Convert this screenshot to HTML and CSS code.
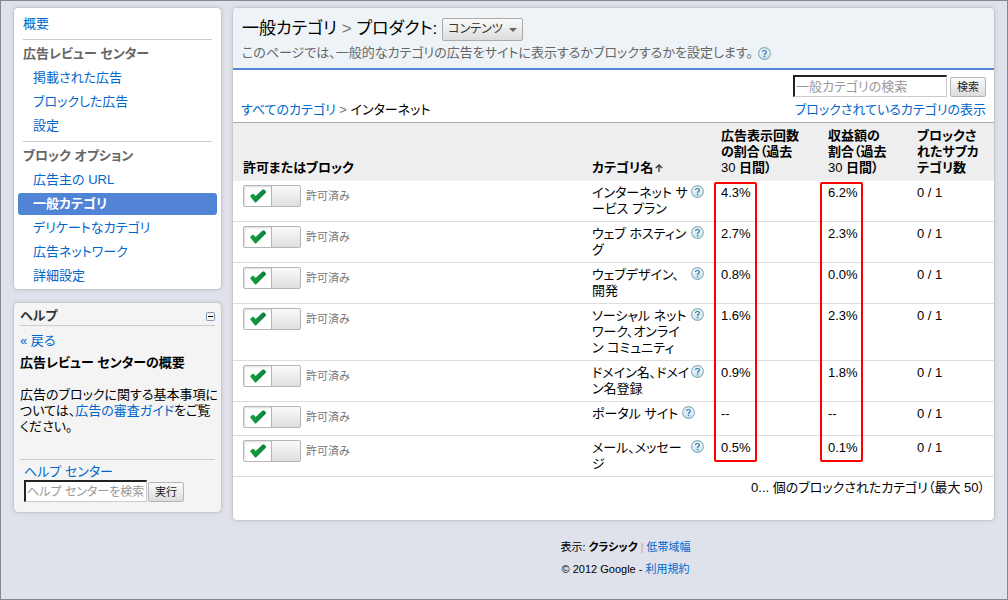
FILE: index.html
```html
<!DOCTYPE html>
<html lang="ja">
<head>
<meta charset="utf-8">
<title>一般カテゴリ</title>
<link rel="stylesheet" href="styles.css">
</head>
<body>
<svg class="defs" aria-hidden="true">
  <defs>
    <linearGradient id="g-help" x1="0" y1="0" x2="0" y2="1"><stop offset="0" stop-color="#fff"/><stop offset="1" stop-color="#c3e0ea"/></linearGradient>
    <linearGradient id="g-check" x1="0" y1="0" x2="1" y2="0"><stop offset="0" stop-color="#17a13c"/><stop offset="1" stop-color="#0b8042"/></linearGradient>
  </defs>
  <symbol id="help" viewBox="0 0 13 13">
    <circle cx="6.5" cy="6.5" r="5.9" fill="url(#g-help)" stroke="#86aeb9" stroke-width="1.1"/>
    <path d="M4.5 5.1C4.5 2.8 8.4 2.8 8.4 5 8.4 6.4 6.5 6.3 6.5 7.9" fill="none" stroke="#4a86b4" stroke-width="1.4"/>
    <rect x="5.8" y="8.8" width="1.5" height="1.4" fill="#4a86b4"/>
  </symbol>
  <symbol id="check" viewBox="0 0 16 14">
    <path d="M0 7.2 2.4 4.8Q4 4.6 5.6 7L12.6 0.4H14.2L16 2.4V3.6L6 13.6H5Z" fill="url(#g-check)"/>
  </symbol>
</svg>
<div class="page">
  <aside class="side">
    <nav class="panel menu">
      <a class="top" href="#">概要</a>
      <h2>広告レビュー センター</h2>
      <a href="#">掲載された広告</a>
      <a href="#">ブロックした広告</a>
      <a href="#">設定</a>
      <h2>ブロック オプション</h2>
      <a href="#">広告主の URL</a>
      <a class="current" href="#">一般カテゴリ</a>
      <a href="#">デリケートなカテゴリ</a>
      <a href="#">広告ネットワーク</a>
      <a href="#">詳細設定</a>
    </nav>
    <section class="panel help">
      <div class="help-head"><h2>ヘルプ</h2><button class="fold" aria-label="折りたたむ"><svg width="9" height="9" viewBox="0 0 9 9"><rect x=".5" y=".5" width="8" height="8" rx="1" fill="#f6f3ea" stroke="#7b96b1"/><path d="M2 4.5H7" stroke="#000"/></svg></button></div>
      <a class="back" href="#">« 戻る</a>
      <h3>広告レビュー センターの概要</h3>
      <p>広告のブロックに関する基本事項に<br>ついては、<a href="#">広告の審査ガイド</a>をご覧<br>ください。</p>
      <div class="help-search">
        <label for="hs">ヘルプ センター</label>
        <div class="line"><input id="hs" type="text" placeholder="ヘルプ センターを検索"><button class="btn">実行</button></div>
      </div>
    </section>
  </aside>
  <div class="content">
    <main class="panel main">
      <header class="title">
        <h1><label for="product">一般カテゴリ <span class="gt">&gt;</span> プロダクト:</label>
          <span class="pick"><select id="product"><option>コンテンツ</option></select><svg width="8" height="4" viewBox="0 0 8 4"><path d="M0 0H8L4 4Z" fill="#666"/></svg></span></h1>
        <p>このページでは、一般的なカテゴリの広告をサイトに表示するかブロックするかを設定します。<a href="#" aria-label="ヘルプ"><svg class="q"><use href="#help"/></svg></a></p>
      </header>
      <div class="tools">
        <div class="crumbs"><a href="#">すべてのカテゴリ</a> <span class="gt">&gt;</span> インターネット</div>
        <div class="find">
          <div class="line"><input type="text" aria-label="一般カテゴリの検索" placeholder="一般カテゴリの検索"><button class="btn">検索</button></div>
          <a href="#">ブロックされているカテゴリの表示</a>
        </div>
      </div>
      <div class="grid">
        <table>
          <colgroup><col><col class="c-name"><col class="c-views"><col class="c-income"><col class="c-sub"></colgroup>
          <thead><tr>
            <th>許可またはブロック</th>
            <th>カテゴリ名<svg class="sort" width="8" height="8" viewBox="0 0 8 8"><path d="M4 8V1M.8 4 4 .9 7.2 4" fill="none" stroke="#444" stroke-width="1.5"/></svg></th>
            <th>広告表示回数<br>の割合（過去<br><span class="num">30</span> 日間）</th>
            <th>収益額の<br>割合（過去<br><span class="num">30</span> 日間）</th>
            <th>ブロックさ<br>れたサブカ<br>テゴリ数</th>
          </tr></thead>
          <tbody>
            <tr><td><div class="allow"><button class="toggle" aria-label="許可" aria-pressed="true"><span><svg><use href="#check"/></svg></span></button>許可済み</div></td><td><div class="name"><span>インターネット サ<br>ービス プラン</span><a href="#" aria-label="ヘルプ"><svg class="q"><use href="#help"/></svg></a></div></td><td>4.3%</td><td>6.2%</td><td>0 / 1</td></tr>
            <tr><td><div class="allow"><button class="toggle" aria-label="許可" aria-pressed="true"><span><svg><use href="#check"/></svg></span></button>許可済み</div></td><td><div class="name"><span>ウェブ ホスティン<br>グ</span><a href="#" aria-label="ヘルプ"><svg class="q"><use href="#help"/></svg></a></div></td><td>2.7%</td><td>2.3%</td><td>0 / 1</td></tr>
            <tr><td><div class="allow"><button class="toggle" aria-label="許可" aria-pressed="true"><span><svg><use href="#check"/></svg></span></button>許可済み</div></td><td><div class="name"><span>ウェブデザイン、<br>開発</span><a href="#" aria-label="ヘルプ"><svg class="q"><use href="#help"/></svg></a></div></td><td>0.8%</td><td>0.0%</td><td>0 / 1</td></tr>
            <tr><td><div class="allow"><button class="toggle" aria-label="許可" aria-pressed="true"><span><svg><use href="#check"/></svg></span></button>許可済み</div></td><td><div class="name"><span>ソーシャル ネット<br>ワーク、オンライ<br>ン コミュニティ</span><a href="#" aria-label="ヘルプ"><svg class="q"><use href="#help"/></svg></a></div></td><td>1.6%</td><td>2.3%</td><td>0 / 1</td></tr>
            <tr><td><div class="allow"><button class="toggle" aria-label="許可" aria-pressed="true"><span><svg><use href="#check"/></svg></span></button>許可済み</div></td><td><div class="name"><span>ドメイン名、ドメイ<br>ン名登録</span><a href="#" aria-label="ヘルプ"><svg class="q"><use href="#help"/></svg></a></div></td><td>0.9%</td><td>1.8%</td><td>0 / 1</td></tr>
            <tr><td><div class="allow"><button class="toggle" aria-label="許可" aria-pressed="true"><span><svg><use href="#check"/></svg></span></button>許可済み</div></td><td><div class="name short"><span>ポータル サイト</span><a href="#" aria-label="ヘルプ"><svg class="q"><use href="#help"/></svg></a></div></td><td>--</td><td>--</td><td>0 / 1</td></tr>
            <tr><td><div class="allow"><button class="toggle" aria-label="許可" aria-pressed="true"><span><svg><use href="#check"/></svg></span></button>許可済み</div></td><td><div class="name"><span>メール、メッセー<br>ジ</span><a href="#" aria-label="ヘルプ"><svg class="q"><use href="#help"/></svg></a></div></td><td>0.5%</td><td>0.1%</td><td>0 / 1</td></tr>
          </tbody>
        </table>
        <div class="mark mark-views"></div>
        <div class="mark mark-income"></div>
      </div>
      <p class="total">0... 個のブロックされたカテゴリ（最大 50）</p>
    </main>
    <footer>
      <div>表示: <b>クラシック</b> <span class="bar">|</span> <a href="#">低帯域幅</a></div>
      <div>© 2012 Google - <a href="#">利用規約</a></div>
    </footer>
  </div>
</div>
</body>
</html>
```
FILE: styles.css
```css
* { box-sizing: border-box; }
body {
  margin: 0;
  min-height: 100vh;
  border: 1px solid #86868e;
  background: #e0e2eb;
  color: #000;
  font: 13px/16px "Liberation Sans", "Noto Sans CJK JP", sans-serif;
  font-feature-settings: "palt";
}
h1, h2, h3, p { margin: 0; font-size: 13px; }
a { color: #0066cc; text-decoration: none; }
button, input, select { font: inherit; font-feature-settings: inherit; margin: 0; }
.defs { position: absolute; width: 0; height: 0; }
.page { display: flex; align-items: flex-start; gap: 10px; padding: 6px 12px 0; }
.side { flex: 0 0 209px; min-width: 0; display: flex; flex-direction: column; gap: 12px; }
.content { flex: 1; min-width: 0; }
.panel {
  border: 1px solid #c9c9cb;
  border-radius: 5px;
  background: #fff;
  box-shadow: 0 0 4px #c8c9d0;
}

.menu { padding: 5px 4px 0; }
.menu a { display: block; height: 22px; margin-bottom: 2px; padding-left: 15px; line-height: 22px; border-radius: 3px; }
.menu .top { padding-left: 5px; }
.menu h2 {
  height: 28px;
  margin: 3px 5px 0;
  border-top: 1px solid #ccc;
  color: #666;
  line-height: 28px;
}
.menu a + h2 { margin-top: 4px; }
.menu .current { background: #5184d4; color: #fff; font-weight: bold; }

.help { padding: 4px 6px 6px; background: #f4f4f4; }
.help-head { display: flex; align-items: center; justify-content: space-between; height: 19px; border-bottom: 1px solid #ccc; }
.help-head h2 { color: #333; }
.fold { display: flex; padding: 0; border: 0; background: none; }
.back { display: block; margin-top: 7px; }
.help h3 { margin-top: 6px; }
.help p { margin-top: 16px; white-space: nowrap; }
.help-search { margin-top: 24px; padding: 4px 4px; border-top: 1px solid #ccc; }
.help-search label { display: block; color: #0066cc; }
.line { display: flex; align-items: flex-end; }
input {
  height: 22px;
  padding: 0 1px;
  border: 2px solid;
  border-width: 2px 1px 1px 2px;
  border-color: #222 #ccc #ccc #222;
  background: #fff;
}
input::placeholder { color: #999; opacity: 1; }
.help-search .line { gap: 1px; }
.help-search input { width: 123px; font-size: 12px; }
.btn {
  width: 36px;
  height: 20px;
  padding: 0;
  border: 1px solid #b5b5b5;
  border-radius: 2px;
  background: linear-gradient(#fafafa, #dcdcdc);
  color: #222;
  font-size: 11px;
  line-height: 16px;
}

.main { padding-bottom: 20px; }
.title { padding: 8px 9px 6px; height: 62px; border-bottom: 2px solid #4f86d5; border-radius: 4px 4px 0 0; background: #edf3f7; }
.title h1 { display: flex; align-items: center; gap: 5px; height: 26px; font-size: 17px; font-weight: normal; }
.gt { color: #777; }
.pick { position: relative; display: flex; }
.pick select {
  appearance: none;
  width: 81px;
  height: 23px;
  padding: 0 0 0 5px;
  border: 1px solid #aaa;
  border-radius: 2px;
  background: linear-gradient(#fafafa, #dcdcdc);
  color: #333;
  font-size: 12px;
  line-height: 16px;
}
.pick svg { position: absolute; right: 6px; top: 10px; pointer-events: none; }
.title p { display: flex; align-items: center; gap: 5px; margin-top: 3px; color: #666; }
.q { display: block; width: 13px; height: 13px; }

.tools { display: flex; justify-content: space-between; align-items: flex-end; height: 52px; padding: 0 8px 4px; }
.find { display: flex; flex-direction: column; align-items: flex-end; gap: 5px; }
.find .line { gap: 3px; }
.find input { width: 154px; }

.grid { position: relative; }
table { width: 100%; table-layout: fixed; border-collapse: collapse; border-top: 1px solid #aaa; }
.c-name { width: 129px; }
.c-views { width: 107px; }
.c-income { width: 89px; }
.c-sub { width: 87px; }
th { padding: 5px 0 5px 10px; background: #eee; text-align: left; vertical-align: bottom; white-space: nowrap; }
.num { font-weight: normal; }
.sort { margin-left: 2px; }
td { padding: 4px 0 4px 10px; border-bottom: 1px solid #ddd; vertical-align: top; }
.allow { display: flex; align-items: center; gap: 5px; height: 22px; margin-bottom: 3px; color: #777; font-size: 11px; }
.toggle { display: flex; width: 58px; height: 22px; padding: 0; border: 1px solid #b5b5b5; border-radius: 2px; background: linear-gradient(#fafafa, #dfdfdf); }
.toggle span { display: flex; align-items: center; justify-content: center; width: 28px; height: 20px; border-right: 1px solid #b5b5b5; background: #fff; box-shadow: inset 1px 1px 2px #ddd; }
.toggle svg { width: 16px; height: 14px; }
.name { display: flex; gap: 4px; }
.name span { width: 95px; white-space: nowrap; }
.short span { width: auto; }
.mark { position: absolute; top: 60px; bottom: 15px; width: 43px; border: 2px solid #f00; border-radius: 2px; }
.mark-views { right: 237px; }
.mark-income { right: 131px; }
.total { padding: 3px 9px 4px; text-align: right; }

footer { display: flex; flex-direction: column; gap: 6px; margin-top: 18px; padding-left: 24px; text-align: center; font-size: 11px; }
.bar { color: #d9a860; }
```
